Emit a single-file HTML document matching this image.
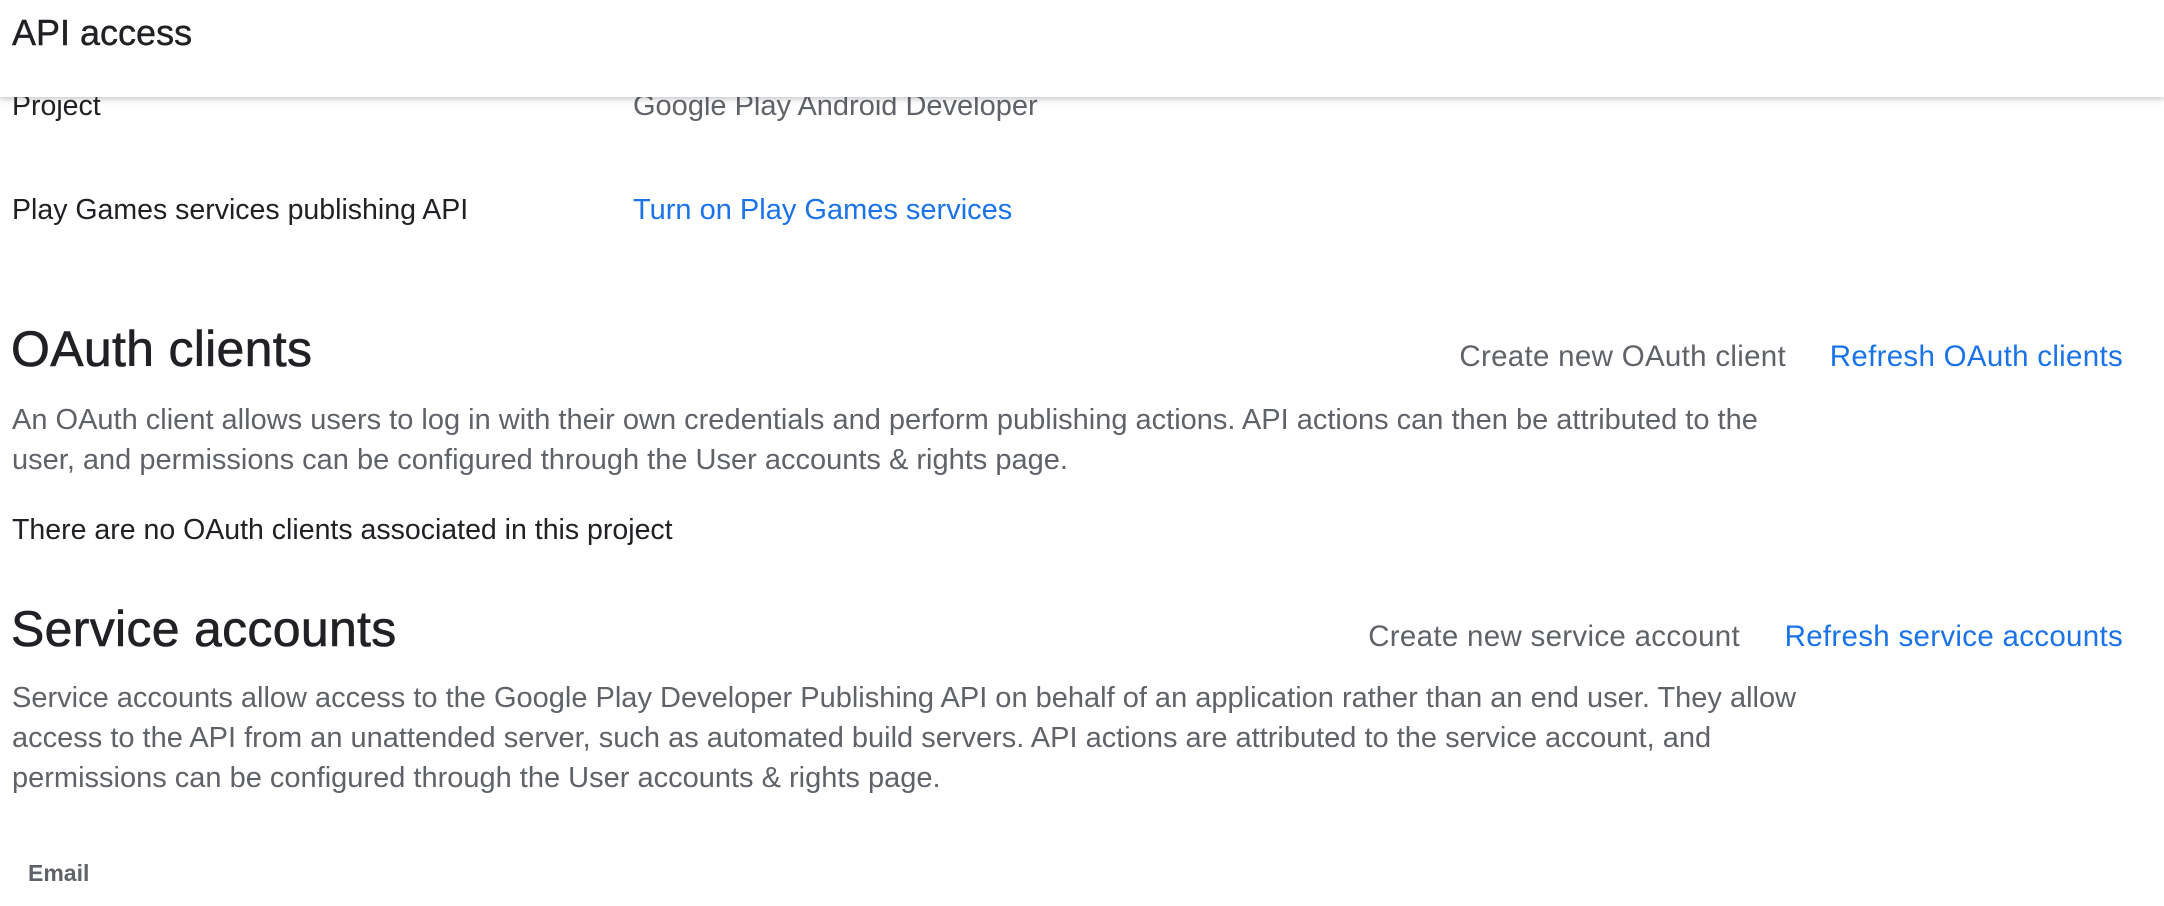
<!DOCTYPE html>
<html><head><meta charset="utf-8"><style>
html,body{margin:0;padding:0;background:#fff;width:2164px;height:906px;overflow:hidden;font-family:"Liberation Sans",Arial,sans-serif;}
.a{position:absolute;white-space:nowrap;line-height:40px;}
.hdr{position:absolute;left:0;top:0;width:2164px;height:97px;background:#fff;box-shadow:0 2px 6px rgba(60,64,67,.3);z-index:2;}
.t{font-size:28.5px;color:#202124;}
.g{font-size:29px;color:#5f6368;}
.b{font-size:29px;color:#1a73e8;}
.act{font-size:29.5px;letter-spacing:0.3px;}
.h{font-size:50px;color:#202124;line-height:56px;letter-spacing:0.3px;-webkit-text-stroke:0.6px #202124;}
</style></head><body>
<div class="hdr"><div class="a" style="left:12px;top:13px;font-size:36px;line-height:40px;color:#202124;-webkit-text-stroke:0.4px #202124;">API access</div></div>
<div class="a t" style="left:12px;top:86px;">Project</div>
<div class="a g" style="left:633px;top:86px;">Google Play Android Developer</div>
<div class="a t" style="left:12px;top:190px;">Play Games services publishing API</div>
<div class="a b" style="left:633px;top:190px;">Turn on Play Games services</div>

<div class="a h" style="left:11px;top:321px;">OAuth clients</div>
<div class="a g act" style="right:378px;top:337px;">Create new OAuth client</div>
<div class="a b act" style="right:41px;top:337px;">Refresh OAuth clients</div>
<div class="a g" style="left:12px;top:400px;">An OAuth client allows users to log in with their own credentials and perform publishing actions. API actions can then be attributed to the</div>
<div class="a g" style="left:12px;top:440px;">user, and permissions can be configured through the User accounts &amp; rights page.</div>
<div class="a t" style="left:12px;top:510px;">There are no OAuth clients associated in this project</div>

<div class="a h" style="left:11px;top:601px;">Service accounts</div>
<div class="a g act" style="right:424px;top:617px;">Create new service account</div>
<div class="a b act" style="right:41px;top:617px;">Refresh service accounts</div>
<div class="a g" style="left:12px;top:678px;">Service accounts allow access to the Google Play Developer Publishing API on behalf of an application rather than an end user. They allow</div>
<div class="a g" style="left:12px;top:718px;">access to the API from an unattended server, such as automated build servers. API actions are attributed to the service account, and</div>
<div class="a g" style="left:12px;top:758px;">permissions can be configured through the User accounts &amp; rights page.</div>
<div class="a" style="left:28px;top:853px;font-size:23px;font-weight:bold;color:#5f6368;">Email</div>
</body></html>
